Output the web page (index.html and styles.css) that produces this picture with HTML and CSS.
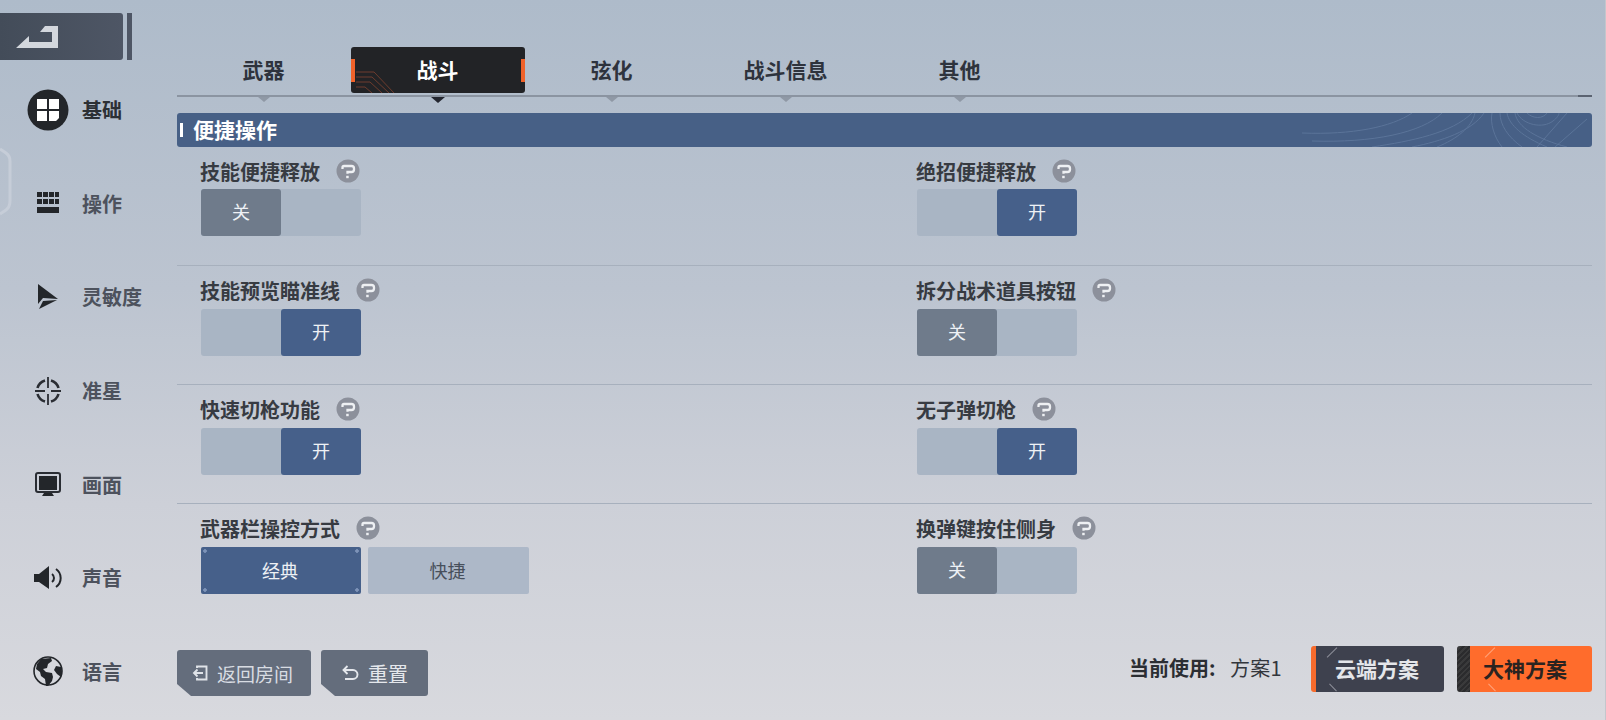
FILE: index.html
```html
<!DOCTYPE html>
<html lang="zh-CN">
<head>
    <meta charset="UTF-8">
    <meta name="viewport" content="width=device-width, initial-scale=1.0">
    <title>设置 - 战斗</title>
    <link rel="stylesheet" href="styles.css">
</head>
<body>
    <svg class="defs" width="0" height="0">
        <symbol id="help" viewBox="0 0 24 24">
            <circle cx="12" cy="12" r="11.500" fill="#8c909b"/>
            <path d="M6.500 10V8.500Q6.500 7 8 7h7.500q2.500 0 2.500 2.500v1q0 2.500-2.500 2.500H11.500v1.800" fill="none" stroke="#eef0f3" stroke-width="2.300"/>
            <rect x="10.200" y="16.800" width="2.500" height="2.400" fill="#eef0f3"/>
        </symbol>
    </svg>

    <svg class="edgeHex" width="14" height="70" viewBox="0 0 14 70" fill="none" stroke="#c6cdd8" stroke-width="3">
        <path d="M0 2l6 4q4 3 4 8v40q0 6-4 9l-6 4"/>
    </svg>

    <aside class="sidebar">
        <div class="backRow">
            <button class="backButton">
                <svg width="70" height="47" viewBox="0 13 70 47"><polygon points="16,48 29,36 29,42 52,42 52,32 40,32 45,26 58,26 58,48" fill="#d3d7dd"/></svg>
            </button>
            <span class="backBar"></span>
        </div>
        <nav class="nav">
            <a class="navItem active">
                <span class="navIcon">
                    <svg width="42" height="42" viewBox="0 0 42 42"><circle cx="21" cy="21" r="20.500" fill="#23262a"/><path d="M10 10h10v10H10zM22 10h10v10H22zM10 22h10v10H10zM22 22h10v7l-3 3h-7z" fill="#fff"/></svg>
                </span>
                基础
            </a>
            <a class="navItem">
                <span class="navIcon">
                    <svg width="24" height="22" viewBox="0 0 24 22" fill="#23262a"><path d="M1 0h5v5H1zM7 0h5v5H7zM13 0h5v5h-5zM19 0h4v5h-4zM1 7h5v5H1zM7 7h5v5H7zM13 7h5v5h-5zM19 7h4v5h-4zM1 15h22v6H1z"/></svg>
                </span>
                操作
            </a>
            <a class="navItem">
                <span class="navIcon">
                    <svg width="24" height="26" viewBox="0 0 24 26" fill="#23262a"><path d="M2 0l20 15-15-1-5 6zM3 25l4-8 14-1z" /></svg>
                </span>
                灵敏度
            </a>
            <a class="navItem">
                <span class="navIcon">
                    <svg width="28" height="28" viewBox="0 0 28 28" fill="none" stroke="#2a2d33" stroke-width="2.600">
                        <path d="M11 3.500A11 11 0 0 0 3.500 11M17 3.500A11 11 0 0 1 24.500 11M3.500 17A11 11 0 0 0 11 24.500M24.500 17A11 11 0 0 1 17 24.500"/>
                        <path d="M14 0v11M14 17v11M1 14h10M17 14h10" stroke-width="1.800"/>
                    </svg>
                </span>
                准星
            </a>
            <a class="navItem">
                <span class="navIcon">
                    <svg width="26" height="24" viewBox="0 0 26 24">
                        <rect x="1" y="1" width="24" height="19" rx="2" fill="#fff0" stroke="#2a2d33" stroke-width="2"/>
                        <rect x="4" y="4" width="18" height="14" fill="#23262a"/>
                        <path d="M7 24l2-3h8l2 3z" fill="#23262a"/>
                    </svg>
                </span>
                画面
            </a>
            <a class="navItem">
                <span class="navIcon">
                    <svg width="28" height="24" viewBox="0 0 28 24" fill="none" stroke="#23262a" stroke-width="2">
                        <path d="M0 8h5l10-8v23L5 16H0z" fill="#23262a" stroke="none"/>
                        <path d="M18 8a5 5 0 0 1 0 8M22 3a11 11 0 0 1 0 18"/>
                    </svg>
                </span>
                声音
            </a>
            <a class="navItem">
                <span class="navIcon">
                    <svg width="30" height="30" viewBox="0 0 30 30">
                        <circle cx="15" cy="15" r="14" fill="#d5d7dc" stroke="#23262a" stroke-width="1.600"/>
                        <path d="M8 3l10-1 1 3-4 3-1 4-4 1 3 3 6 1 1 4-1 4-4 5-2 0-1-7-4-3-1-4-4-3 1-5z" fill="#23262a"/>
                        <path d="M23 10l5 1 1 5-1 5-4-3-3-4z" fill="#23262a"/>
                    </svg>
                </span>
                语言
            </a>
        </nav>
    </aside>

    <main class="main">
        <div class="tabs">
            <div class="tab"><span>武器</span></div>
            <div class="tab active">
                <svg class="tabLines" width="50" height="26" viewBox="0 0 50 26" fill="none" stroke="#6e3d2e" stroke-width="1">
                    <path d="M0 5h18l20 21M0 10h16l17 16M0 15h14l12 11M0 20h9l7 6"/>
                </svg>
                <span>战斗</span>
            </div>
            <div class="tab"><span>弦化</span></div>
            <div class="tab"><span>战斗信息</span></div>
            <div class="tab"><span>其他</span></div>
        </div>

        <div class="sectionBar">
            <span class="sectionTick"></span><span class="sectionTitle">便捷操作</span>
            <svg class="sectionPattern" width="290" height="34" viewBox="0 0 290 34" fill="none" stroke="#5b7499" stroke-width="1">
                <path d="M0 20c50 2 90-6 110-20M10 28c60 2 110-8 130-28M70 34c40-6 80-14 100-34M110 34c30-6 60-16 72-34M135 34c20-8 35-20 38-34M200 34c-8-10-12-24-10-34M220 34c-14-10-22-22-22-34M245 34c-24-10-38-22-40-34M265 34c-30-8-50-20-52-34M215 0c6 12 26 16 36 8 4-3 6-6 6-8M225 0c6 6 16 6 20 0M265 0l-30 34M285 6l-32 28"/>
            </svg>
        </div>

        <section class="row first">
            <div class="setting">
                <div class="label">技能便捷释放 <svg class="help"><use href="#help"/></svg></div>
                <div class="toggle"><span class="off">关</span><span></span></div>
            </div>
            <div class="setting">
                <div class="label">绝招便捷释放 <svg class="help"><use href="#help"/></svg></div>
                <div class="toggle"><span></span><span class="on">开</span></div>
            </div>
        </section>
        <section class="row">
            <div class="setting">
                <div class="label">技能预览瞄准线 <svg class="help"><use href="#help"/></svg></div>
                <div class="toggle"><span></span><span class="on">开</span></div>
            </div>
            <div class="setting">
                <div class="label">拆分战术道具按钮 <svg class="help"><use href="#help"/></svg></div>
                <div class="toggle"><span class="off">关</span><span></span></div>
            </div>
        </section>
        <section class="row">
            <div class="setting">
                <div class="label">快速切枪功能 <svg class="help"><use href="#help"/></svg></div>
                <div class="toggle"><span></span><span class="on">开</span></div>
            </div>
            <div class="setting">
                <div class="label">无子弹切枪 <svg class="help"><use href="#help"/></svg></div>
                <div class="toggle"><span></span><span class="on">开</span></div>
            </div>
        </section>
        <section class="row last">
            <div class="setting">
                <div class="label">武器栏操控方式 <svg class="help"><use href="#help"/></svg></div>
                <div class="options">
                    <span class="option selected">经典<i class="dots"></i></span>
                    <span class="option">快捷</span>
                </div>
            </div>
            <div class="setting">
                <div class="label">换弹键按住侧身 <svg class="help"><use href="#help"/></svg></div>
                <div class="toggle"><span class="off">关</span><span></span></div>
            </div>
        </section>

        <footer class="footer">
            <div class="footerLeft">
                <button class="greyButton back">
                    <svg width="16" height="16" viewBox="0 0 16 16" fill="none" stroke="#dfe3e8" stroke-width="1.900"><path d="M5 3V1.500h9.500v13H5V13M11 8H2M5.500 4.500L2 8l3.500 3.500"/></svg>
                    返回房间
                </button>
                <button class="greyButton reset">
                    <svg width="17" height="16" viewBox="0 0 17 16" fill="none" stroke="#e4e7ec" stroke-width="1.900"><path d="M5.500 1L1.500 5l4 4M2 5h9a4.500 4.500 0 0 1 0 9H3"/></svg>
                    重置
                </button>
            </div>
            <div class="footerRight">
                <div class="current"><b>当前使用:</b><span>方案1</span></div>
                <button class="planButton cloud">云端方案</button>
                <button class="planButton master">大神方案</button>
            </div>
        </footer>
    </main>
</body>
</html>
```

FILE: styles.css
```css
* {
    box-sizing: border-box;
}

html, body {
    margin: 0;
    padding: 0;
}

body {
    width: 1606px;
    height: 720px;
    overflow: hidden;
    display: flex;
    position: relative;
    font-family: "Noto Sans CJK SC", "Noto Sans", sans-serif;
    background: linear-gradient(180deg, #aebbca 0%, #bcc4d0 40%, #cdd0d8 70%, #d8d9de 100%);
    border-right: 1px solid #c4c6cc;
}

button {
    font-family: inherit;
    border: none;
    padding: 0;
}

.defs {
    position: absolute;
}

.edgeHex {
    position: absolute;
    left: 0;
    top: 147px;
}

/* left side */
.sidebar {
    width: 177px;
    flex: none;
}

.backRow {
    display: flex;
    gap: 4px;
    margin-top: 13px;
    height: 47px;
}

.backButton {
    width: 123px;
    height: 47px;
    background: linear-gradient(90deg, #434c59, #4e5665);
    border-radius: 0 3px 3px 0;
    text-align: left;
}

.backButton svg {
    display: block;
}

.backBar {
    width: 5px;
    background: #4e5665;
}

.nav {
    margin-top: 3px;
}

.navItem {
    height: 93.6px;
    display: flex;
    align-items: center;
    font-size: 20px;
    font-weight: 700;
    color: #4d525d;
}

.navItem.active {
    color: #2c3035;
}

.navIcon {
    width: 82px;
    padding-left: 15px;
    padding-right: 1px;
    display: flex;
    justify-content: center;
    flex: none;
}

.navIcon svg {
    display: block;
}

/* tabs */
.main {
    width: 1415px;
    padding-top: 47px;
}

.tabs {
    display: flex;
    height: 50px;
    border-bottom: 2px solid #8b94a1;
    position: relative;
}

.tabs::after {
    content: "";
    position: absolute;
    right: 0;
    bottom: -2px;
    width: 14px;
    height: 2px;
    background: #5b6371;
}

.tab {
    width: 174px;
    height: 46px;
    display: flex;
    align-items: center;
    justify-content: center;
    font-size: 21px;
    font-weight: 700;
    color: #2e333d;
    position: relative;
}

.tab span {
    margin: 0 1px 3px 0;
}

.tab::after {
    content: "";
    position: absolute;
    left: 50%;
    top: 50px;
    margin-left: -6px;
    border-left: 6px solid transparent;
    border-right: 6px solid transparent;
    border-top: 5px solid #8f98a5;
}

.tab.active {
    background: #222326;
    color: #fff;
    border-radius: 3px;
}

.tab.active::before {
    content: "";
    position: absolute;
    left: 0;
    right: 0;
    top: 12px;
    height: 23px;
    border-left: 4px solid #f0622a;
    border-right: 4px solid #f0622a;
}

.tab.active::after {
    border-top-color: #23262f;
    border-top-width: 6px;
    margin-left: -7px;
    border-left-width: 7px;
    border-right-width: 7px;
}

.tabLines {
    position: absolute;
    left: 5px;
    bottom: 0;
}

/* section title */
.sectionBar {
    height: 34px;
    margin-top: 16px;
    background: #476086;
    border-radius: 3px;
    color: #fff;
    font-size: 21px;
    font-weight: 700;
    line-height: 34px;
    display: flex;
    align-items: center;
    position: relative;
    overflow: hidden;
}

.sectionTick {
    width: 3px;
    height: 14px;
    background: #fff;
    margin-left: 3px;
    margin-right: 10px;
}

.sectionTitle {
    margin-bottom: 3px;
}

.sectionPattern {
    position: absolute;
    right: 0;
    top: 0;
}

/* settings rows */
.row {
    display: grid;
    grid-template-columns: 716px 1fr;
    height: 119px;
    padding: 11px 0 0 24px;
    border-bottom: 1px solid #a7b0bd;
}

.row.last {
    border-bottom: none;
}

.label {
    height: 26px;
    display: flex;
    align-items: center;
    gap: 16px;
    font-size: 20px;
    font-weight: 700;
    color: #373b42;
    white-space: nowrap;
    margin: 0 0 6px -1px;
}

.row.first .label {
    margin-bottom: 5px;
}

.help {
    width: 24px;
    height: 24px;
}

.toggle {
    width: 160px;
    height: 47px;
    display: flex;
    background: #a9b5c4;
    border-radius: 3px;
    font-size: 18px;
    color: #eef1f5;
}

.toggle span {
    width: 80px;
    display: flex;
    align-items: center;
    justify-content: center;
    border-radius: 3px;
    padding-bottom: 3px;
}

.toggle .off {
    background: #6f7b8b;
}

.toggle .on {
    background: #46608a;
}

.options {
    display: flex;
    gap: 7px;
}

.option {
    width: 161px;
    height: 47px;
    display: flex;
    align-items: center;
    justify-content: center;
    background: #adb8c8;
    color: #474f5b;
    font-size: 18px;
    border-radius: 2px;
    position: relative;
    padding: 0 2px 2px 0;
}

.option.selected {
    width: 160px;
    background: #46608a;
    color: #eef1f5;
}

.dots {
    position: absolute;
    inset: 2px;
    background:
        radial-gradient(circle, #7d93b8 1.5px, transparent 2px) left top / 4px 4px no-repeat,
        radial-gradient(circle, #7d93b8 1.5px, transparent 2px) right top / 4px 4px no-repeat,
        radial-gradient(circle, #7d93b8 1.5px, transparent 2px) left bottom / 4px 4px no-repeat,
        radial-gradient(circle, #7d93b8 1.5px, transparent 2px) right bottom / 4px 4px no-repeat;
}

/* bottom buttons */
.footer {
    height: 50px;
    margin-top: 23px;
    display: flex;
    justify-content: space-between;
}

.footerLeft {
    display: flex;
    gap: 10px;
    align-items: flex-end;
}

.greyButton {
    height: 46px;
    display: flex;
    align-items: center;
    background: #646d7c;
    color: #d8dce2;
    font-size: 19px;
    border-radius: 3px;
    clip-path: polygon(0 0, 100% 0, 100% 100%, 14px 100%, 0 34px);
}

.greyButton.back {
    width: 134px;
    padding-left: 15px;
    gap: 9px;
}

.greyButton.reset {
    width: 107px;
    padding-left: 21px;
    gap: 9px;
    font-size: 20px;
    color: #e4e7ec;
}

.footerRight {
    display: flex;
    align-items: flex-start;
    gap: 13px;
}

.current {
    height: 46px;
    display: flex;
    align-items: center;
    font-size: 20px;
    letter-spacing: 0.3px;
    color: #33363c;
    margin-right: 16px;
    padding-bottom: 3px;
}

.current b {
    font-size: 20px;
    letter-spacing: 0;
    color: #2b2e33;
    width: 101px;
}

.planButton {
    height: 46px;
    font-size: 21px;
    font-weight: 700;
    border-radius: 3px;
    padding-bottom: 3px;
    position: relative;
}

.planButton::before,
.planButton::after {
    content: "";
    position: absolute;
    width: 14px;
    height: 1px;
    background: #8d8f99;
}

.planButton::before {
    top: 6px;
    transform: rotate(-45deg);
}

.planButton::after {
    bottom: 4px;
    width: 10px;
    transform: rotate(45deg);
}

.planButton.cloud {
    width: 133px;
    background: #3e414e;
    color: #e4e6ea;
    border-left: 5px solid #f76b2c;
    padding-left: 19px;
    text-align: left;
}

.planButton.cloud::before {
    left: 9px;
}

.planButton.cloud::after {
    left: 12px;
}

.planButton.master {
    width: 135px;
    color: #2a2320;
    padding-left: 26px;
    text-align: left;
    background:
        repeating-linear-gradient(135deg, #2b2b2d 0 2px, #3a3a3b 2px 4px) left / 13px 100% no-repeat,
        #ff6c2c;
}

.planButton.master::before,
.planButton.master::after {
    background: #ffa47c;
}

.planButton.master::before {
    left: 26px;
}

.planButton.master::after {
    left: 30px;
}
```
